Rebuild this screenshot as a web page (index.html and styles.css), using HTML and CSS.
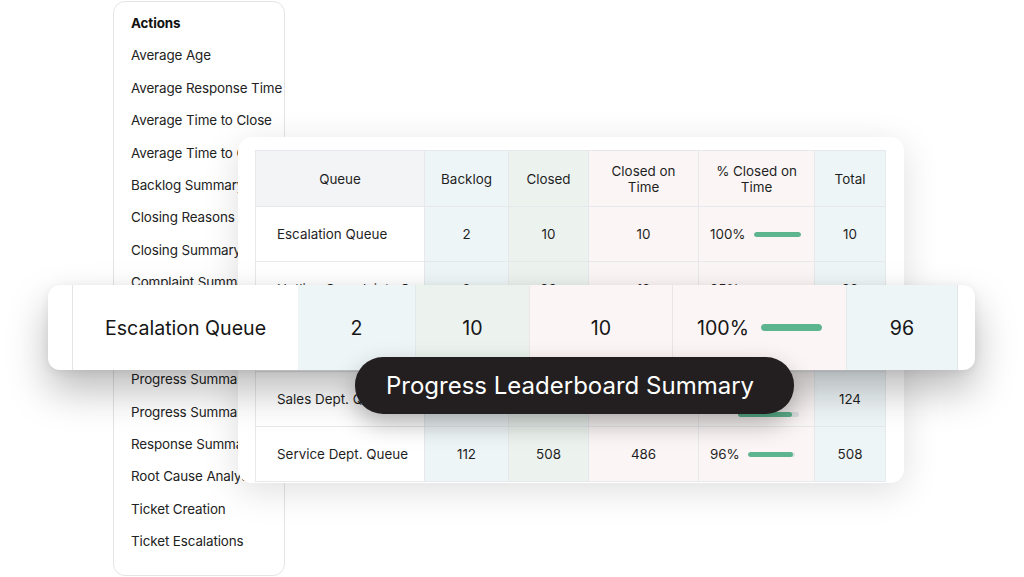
FILE: index.html
```html
<!DOCTYPE html>
<html lang="en">
<head>
<meta charset="utf-8">
<title>Progress Leaderboard Summary</title>
<link rel="stylesheet" href="styles.css">
</head>
<body>
<div class="stage">
  <aside class="menu">
    <ul class="menu-list">
      <li class="menu-title">Actions</li>
      <li>Average Age</li>
      <li>Average Response Time</li>
      <li>Average Time to Close</li>
      <li>Average Time to Close by Queue</li>
      <li>Backlog Summary</li>
      <li>Closing Reasons</li>
      <li>Closing Summary</li>
      <li>Complaint Summary</li>
      <li>Escalation Summary</li>
      <li>First Response Summary</li>
      <li>Progress Summary</li>
      <li>Progress Summary by Agent</li>
      <li>Response Summary</li>
      <li>Root Cause Analysis</li>
      <li>Ticket Creation</li>
      <li>Ticket Escalations</li>
    </ul>
  </aside>

  <section class="table-card">
    <table class="board">
      <colgroup>
        <col class="c-queue"><col class="c-backlog"><col class="c-closed"><col class="c-cot"><col class="c-pct"><col class="c-total">
      </colgroup>
      <thead>
        <tr>
          <th class="queue">Queue</th>
          <th class="blue">Backlog</th>
          <th class="green">Closed</th>
          <th class="pink">Closed on<br>Time</th>
          <th class="pink">% Closed on<br>Time</th>
          <th class="blue">Total</th>
        </tr>
      </thead>
      <tbody>
        <tr>
          <td class="queue">Escalation Queue</td>
          <td class="blue">2</td>
          <td class="green">10</td>
          <td class="pink">10</td>
          <td class="pink pct"><div class="pct-wrap"><span>100%</span><span class="track"><span class="fill" style="width:100%"></span></span></div></td>
          <td class="blue">10</td>
        </tr>
        <tr>
          <td class="queue">Hotline Complaints Queue</td>
          <td class="blue">8</td>
          <td class="green">98</td>
          <td class="pink">18</td>
          <td class="pink pct"><div class="pct-wrap"><span>95%</span><span class="track"><span class="fill" style="width:95%"></span></span></div></td>
          <td class="blue">98</td>
        </tr>
        <tr>
          <td class="queue">Product Support Queue</td>
          <td class="blue">4</td>
          <td class="green">40</td>
          <td class="pink">38</td>
          <td class="pink pct"><div class="pct-wrap"><span>95%</span><span class="track"><span class="fill" style="width:95%"></span></span></div></td>
          <td class="blue">44</td>
        </tr>
        <tr>
          <td class="queue">Sales Dept. Queue</td>
          <td class="blue">10</td>
          <td class="green">114</td>
          <td class="pink">100</td>
          <td class="pink pct low"><div class="pct-stack"><span>88%</span><span class="track wide"><span class="fill" style="width:88%"></span></span></div></td>
          <td class="blue">124</td>
        </tr>
        <tr>
          <td class="queue">Service Dept. Queue</td>
          <td class="blue">112</td>
          <td class="green">508</td>
          <td class="pink">486</td>
          <td class="pink pct"><div class="pct-wrap"><span>96%</span><span class="track"><span class="fill" style="width:96%"></span></span></div></td>
          <td class="blue">508</td>
        </tr>
      </tbody>
    </table>
  </section>

  <div class="focus-row">
    <div class="f-cell f-lead"></div>
    <div class="f-cell f-queue">Escalation Queue</div>
    <div class="f-cell f-backlog blue">2</div>
    <div class="f-cell f-closed green">10</div>
    <div class="f-cell f-cot pink">10</div>
    <div class="f-cell f-pct pink"><span>100%</span><span class="f-track"><span class="fill" style="width:100%"></span></span></div>
    <div class="f-cell f-total blue">96</div>
    <div class="f-cell f-tail"></div>
  </div>

  <div class="pill">Progress Leaderboard Summary</div>
</div>
</body>
</html>
```

FILE: styles.css
```css
* { box-sizing: border-box; }

html, body {
  margin: 0;
  padding: 0;
  background: #ffffff;
}

body {
  font-family: "Inter", "Liberation Sans", Arial, sans-serif;
  color: #1f1f1f;
  width: 1024px;
  height: 577px;
  overflow: hidden;
}

.stage {
  position: relative;
  width: 1024px;
  height: 577px;
  overflow: hidden;
}

/* ---------- side menu ---------- */
.menu {
  position: absolute;
  left: 113px;
  top: 1px;
  width: 172px;
  height: 575px;
  border: 1px solid #e4e4e6;
  border-radius: 12px;
  background: #ffffff;
  overflow: hidden;
}

.menu-list {
  list-style: none;
  margin: 0;
  padding: 5px 0 0 17px;
}

.menu-list li {
  height: 32.4px;
  line-height: 32.4px;
  font-size: 13.4px;
  letter-spacing: -0.1px;
  white-space: nowrap;
  color: #222222;
}

.menu-list .menu-title {
  font-weight: 700;
  color: #111111;
}

/* ---------- table card ---------- */
.table-card {
  position: absolute;
  left: 238px;
  top: 137px;
  width: 666px;
  height: 346px;
  background: #ffffff;
  border-radius: 14px;
  padding: 13px 19px 0 17px;
  overflow: hidden;
  box-shadow: 0 8px 36px rgba(0, 0, 0, 0.13);
}

.board {
  border-collapse: collapse;
  table-layout: fixed;
  width: 630px;
  font-size: 13.4px;
  color: #1f1f1f;
}

.c-queue { width: 169px; }
.c-backlog { width: 84px; }
.c-closed { width: 80px; }
.c-cot { width: 110px; }
.c-pct { width: 116px; }
.c-total { width: 71px; }

.board th,
.board td {
  border: 1px solid #e6e8ec;
  text-align: center;
  font-weight: 400;
  padding: 0;
}

.board th {
  height: 56px;
  line-height: 16px;
}

.board td {
  height: 55px;
}

.board th.queue { background: #f3f4f6; }
.board td.queue {
  background: #ffffff;
  text-align: left;
  padding-left: 21px;
  white-space: nowrap;
  overflow: hidden;
}

.blue { background: #eef5f7; }
.green { background: #ecf3ef; }
.pink { background: #fbf5f5; }

.board td.pct {
  text-align: left;
  padding-left: 11px;
}

.pct-wrap {
  display: flex;
  align-items: center;
  gap: 8px;
}

.track {
  display: block;
  width: 47px;
  height: 5px;
  border-radius: 3px;
  background: #dfe3e4;
  overflow: hidden;
}

.track.wide { width: 61px; }

.fill {
  display: block;
  height: 100%;
  border-radius: 3px;
  background: #5db58f;
}

.board td.pct.low {
  vertical-align: bottom;
  padding-bottom: 9px;
}

.pct-stack {
  display: flex;
  flex-direction: column;
  align-items: flex-start;
  gap: 6px;
}

.pct-stack .track { margin-left: 28px; }

/* ---------- highlighted floating row ---------- */
.focus-row {
  position: absolute;
  left: 48px;
  top: 285px;
  width: 927px;
  height: 85px;
  display: flex;
  background: #ffffff;
  border-radius: 12px;
  overflow: hidden;
  box-shadow: 0 20px 40px rgba(0, 0, 0, 0.27), 0 2px 10px rgba(0, 0, 0, 0.07);
  font-size: 19.6px;
  color: #161616;
}

.f-cell {
  display: flex;
  align-items: center;
  justify-content: center;
  height: 100%;
  flex: none;
}

.f-lead { width: 25px; border-right: 1px solid #e2e4e8; }
.f-queue { width: 225px; }
.f-backlog { width: 118px; border-right: 1px solid #e3e9ea; }
.f-closed { width: 114px; border-right: 1px solid #eee7e7; }
.f-cot { width: 143px; border-right: 1px solid #ece4e4; }
.f-pct { width: 174px; gap: 12px; border-right: 1px solid #e4eaec; }
.f-total { width: 111px; border-right: 1px solid #e2e4e8; }
.f-tail { width: 17px; }

.f-track {
  display: block;
  width: 61px;
  height: 7px;
  border-radius: 4px;
  background: #dfe3e4;
  overflow: hidden;
}

.f-track .fill { border-radius: 4px; }

/* ---------- title pill ---------- */
.pill {
  position: absolute;
  left: 355px;
  top: 357px;
  width: 439px;
  height: 57px;
  border-radius: 28px;
  background: #231f20;
  color: #ffffff;
  font-size: 24px;
  display: flex;
  align-items: center;
  padding-left: 31px;
  white-space: nowrap;
  box-shadow: 0 10px 24px rgba(0, 0, 0, 0.28);
}
```
